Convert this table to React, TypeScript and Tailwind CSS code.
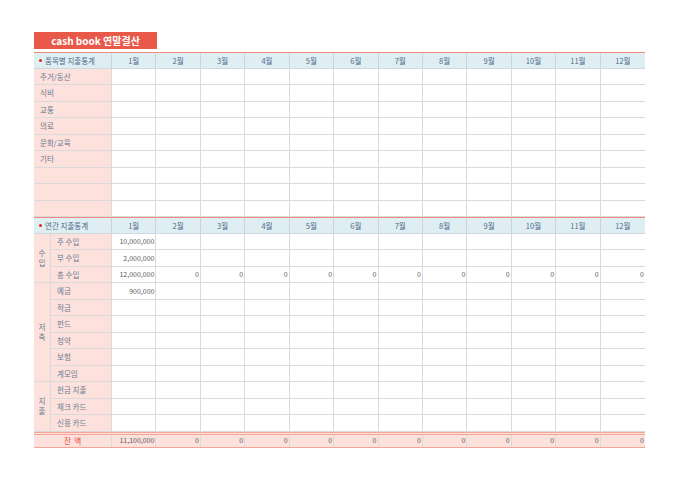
import React from "react";

const months = ["1월","2월","3월","4월","5월","6월","7월","8월","9월","10월","11월","12월"];
const font = { fontFamily: '"Noto Sans CJK KR", "Noto Sans", sans-serif' };

function HeaderRow({ title }: { title: string }) {
  return (
    <div className="grid grid-cols-[78px_repeat(12,1fr)] h-[16.5px] bg-[#dfeef2] border-t border-t-[#f08a7c] border-b border-b-[#cfd8dc]">
      <div className="flex items-center pl-[5px] border-r border-[#d3d3d3] text-[7.5px] text-[#4f6c8c]">
        <span className="inline-block w-[3px] h-[3px] rounded-full bg-[#e8201a] mr-[3px]" />
        {title}
      </div>
      {months.map((m, i) => (
        <div key={m} className={`flex items-center justify-center text-[7.5px] text-[#4f6c8c] ${i < 11 ? "border-r border-[#d3d3d3]" : ""}`}>{m}</div>
      ))}
    </div>
  );
}

function Cells({ values }: { values?: string[] }) {
  return (
    <>
      {months.map((m, i) => (
        <div key={m} className={`flex items-center justify-end pr-[1px] text-[7px] text-[#5a5a5a] bg-white border-b border-[#dadada] ${i < 11 ? "border-r" : ""}`}>
          {values ? values[i] : ""}
        </div>
      ))}
    </>
  );
}

const cats = ["주거/동산","식비","교통","의료","문화/교육","기타","","",""];
const zeros = ["12,000,000","0","0","0","0","0","0","0","0","0","0","0"];
const totals = ["11,100,000","0","0","0","0","0","0","0","0","0","0","0"];

const sub: { label: string; vals?: string[] }[] = [
  { label: "주 수입", vals: ["10,000,000","","","","","","","","","","",""] },
  { label: "부 수입", vals: ["2,000,000","","","","","","","","","","",""] },
  { label: "총 수입", vals: zeros },
  { label: "예금", vals: ["900,000","","","","","","","","","","",""] },
  { label: "적금" },
  { label: "펀드" },
  { label: "청약" },
  { label: "보험" },
  { label: "계모임" },
  { label: "현금 지출" },
  { label: "체크 카드" },
  { label: "신용 카드" },
];

export default function App() {
  return (
    <div className="w-[680px] h-[481px] bg-white pl-[34px] pt-[32px]" style={font}>
      <div className="w-[123px] h-[17px] bg-[#e8594a] flex items-center justify-center text-white text-[10px] font-bold leading-none">
        cash book 연말결산
      </div>
      <div className="w-[611px] mt-[3px]">
        <HeaderRow title="품목별 지출통계" />
        {cats.map((c, r) => (
          <div key={r} className="grid grid-cols-[78px_repeat(12,1fr)] h-[16.5px]">
            <div className="flex items-center pl-[6px] bg-[#fce1dd] border-r border-b border-[#dadada] text-[7.5px] text-[#6c7d93]">{c}</div>
            <Cells />
          </div>
        ))}
        <HeaderRow title="연간 지출통계" />
        <div className="grid grid-cols-[17px_61px_repeat(12,1fr)] grid-rows-[repeat(12,16.5px)]">
          {sub.map((s, r) => {
            const group =
              r === 0 ? ["수", "입", 3] : r === 3 ? ["저", "축", 6] : r === 9 ? ["지", "출", 3] : null;
            return (
              <React.Fragment key={r}>
                {group && (
                  <div
                    className={`col-start-1 flex flex-col items-center justify-center bg-[#fce1dd] border-r border-b border-[#dadada] text-[7.5px] leading-[10px] text-[#6c7d93] ${group[2] === 3 ? "row-span-3" : "row-span-6"}`}
                    style={{ gridRowStart: r + 1 }}
                  >
                    <span>{group[0]}</span>
                    <span>{group[1]}</span>
                  </div>
                )}
                <div className="col-start-2 flex items-center pl-[6px] bg-[#fce1dd] border-r border-b border-[#dadada] text-[7.5px] text-[#6c7d93] whitespace-pre" style={{ gridRowStart: r + 1 }}>{s.label}</div>
                <Cells values={s.vals} />
              </React.Fragment>
            );
          })}
        </div>
        <div className="grid grid-cols-[78px_repeat(12,1fr)] h-[16px] border-t-[3px] border-double border-[#f3a597] border-b border-b-[#f3a597] bg-[#fce1dd]">
          <div className="flex items-center justify-center border-r border-[#dadada] text-[7.5px] text-[#e8413a] whitespace-pre">잔  액</div>
          {totals.map((v, i) => (
            <div key={i} className={`flex items-center justify-end pr-[1px] text-[7px] text-[#5a5a5a] ${i < 11 ? "border-r border-[#dadada]" : ""}`}>{v}</div>
          ))}
        </div>
      </div>
    </div>
  );
}
